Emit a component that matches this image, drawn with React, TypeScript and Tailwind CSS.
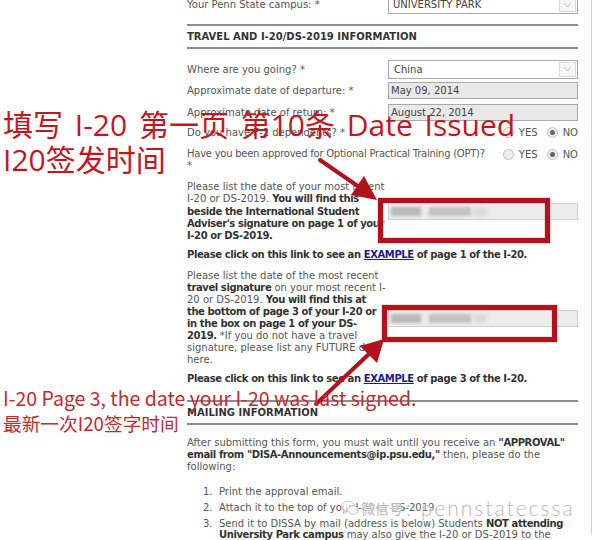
import React from "react";

function Chevron() {
  return (
    <span className="flex h-[15px] w-[17px] items-center justify-center border border-[#d9d9d9] bg-[#f6f6f6]">
      <svg width="9" height="6" viewBox="0 0 9 6">
        <polyline points="1,1 4.5,5 8,1" fill="none" stroke="#b9b9b9" strokeWidth="1" />
      </svg>
    </span>
  );
}

function Select({ value, pl }: { value: string; pl: string }) {
  return (
    <div className={`flex h-[19px] w-[190px] items-center justify-between border border-[#a9a9a9] bg-white pr-[1px] text-[#444] ${pl}`}>
      <span>{value}</span>
      <Chevron />
    </div>
  );
}

function GrayInput({ value }: { value: string }) {
  return (
    <div className="flex h-[17px] w-[190px] items-center border border-[#a9a9a9] bg-[#e8e8e8] pl-[2px] text-[#444]">
      {value}
    </div>
  );
}

function BlurInput() {
  return (
    <div className="flex h-[17px] w-[190px] items-center border border-[#cfcfcf] bg-[#ececec] pl-[2px]">
      <span className="h-[9px] w-[30px] bg-[#b9b9b9] blur-[1.5px]" />
      <span className="ml-[8px] h-[9px] w-[42px] bg-[#c2c2c2] blur-[1.5px]" />
      <span className="ml-[2px] h-[8px] w-[14px] bg-[#d8d8d8] blur-[2px]" />
    </div>
  );
}

function Radio({ checked }: { checked?: boolean }) {
  return (
    <span className="flex h-[11px] w-[11px] items-center justify-center rounded-full border border-[#c2c2c2] bg-[#eeeeee]">
      {checked && <span className="h-[5px] w-[5px] rounded-full bg-[#666]" />}
    </span>
  );
}

function YesNo() {
  return (
    <div className="ml-auto flex h-[15px] items-center text-[#555]">
      <Radio />
      <span className="ml-[5px]">YES</span>
      <span className="ml-[9px]">
        <Radio checked />
      </span>
      <span className="ml-[5px]">NO</span>
    </div>
  );
}

function Rule() {
  return <div className="h-[2px] bg-[#868d94]" />;
}

function Link() {
  return <span className="text-[#1c1c8c] underline">EXAMPLE</span>;
}

function B({ children }: { children: React.ReactNode }) {
  return <b className="tracking-[-0.4px] text-[#333]">{children}</b>;
}

export default function App() {
  return (
    <div className="relative h-[540px] w-[595px] overflow-hidden bg-white">
      <div className="h-full w-[592px] border-r border-[#d4d4d4] pl-[187px] pr-[13px] font-['DejaVu_Sans',sans-serif] text-[10px] text-[#555]">
        {/* campus */}
        <div className="-mt-[5px] flex h-[19px] items-center">
          <div className="w-[201px]">Your Penn State campus: *</div>
          <Select value="UNIVERSITY PARK" pl="pl-[4px]" />
        </div>

        <div className="mt-[10px]">
          <Rule />
        </div>
        <div className="flex h-[21px] items-center font-bold text-[#333]">
          TRAVEL AND I-20/DS-2019 INFORMATION
        </div>
        <Rule />

        <div className="mt-[11px] flex h-[18px] items-center">
          <div className="w-[201px]">Where are you going? *</div>
          <Select value="China" pl="pl-[5px]" />
        </div>
        <div className="mt-[4px] flex h-[17px] items-center">
          <div className="w-[201px]">Approximate date of departure: *</div>
          <GrayInput value="May 09, 2014" />
        </div>
        <div className="mt-[5px] flex h-[17px] items-center">
          <div className="w-[201px]">Approximate date of return: *</div>
          <GrayInput value="August 22, 2014" />
        </div>
        <div className="mt-[4px] flex h-[15px] items-center">
          <div>Do you have F-2 dependents? *</div>
          <YesNo />
        </div>
        <div className="mt-[8px] flex items-start leading-[12px]">
          <div className="tracking-[-0.25px]">
            Have you been approved for Optional Practical Training (OPT)?
            <br />*
          </div>
          <div className="-mt-[1px] ml-auto">
            <YesNo />
          </div>
        </div>

        <div className="mt-[9px] flex items-center">
          <div className="w-[201px] whitespace-nowrap leading-[12.3px]">
            Please list the date of your most recent
            <br />
            I-20 or DS-2019. <B>You will find this</B>
            <br />
            <B>beside the International Student</B>
            <br />
            <B>Adviser's signature on page 1 of your</B>
            <br />
            <B>I-20 or DS-2019.</B>
          </div>
          <BlurInput />
        </div>

        <div className="mt-[7px] whitespace-nowrap font-bold leading-[12px] tracking-[-0.4px] text-[#333]">
          Please click on this link to see an <Link /> of page 1 of the I-20.
        </div>

        <div className="mt-[9px] flex items-center">
          <div className="w-[201px] whitespace-nowrap leading-[12px]">
            Please list the date of the most recent
            <br />
            <B>travel signature</B> on your most recent I-
            <br />
            20 or DS-2019. <B>You will find this at</B>
            <br />
            <B>the bottom of page 3 of your I-20 or</B>
            <br />
            <B>in the box on page 1 of your DS-</B>
            <br />
            <B>2019.</B> *If you do not have a travel
            <br />
            signature, please list any FUTURE date
            <br />
            here.
          </div>
          <BlurInput />
        </div>

        <div className="mt-[7px] whitespace-nowrap font-bold leading-[12px] tracking-[-0.4px] text-[#333]">
          Please click on this link to see an <Link /> of page 3 of the I-20.
        </div>

        <div className="mt-[15px]">
          <Rule />
        </div>
        <div className="flex h-[21px] items-center font-bold text-[#333]">MAILING INFORMATION</div>
        <Rule />

        <div className="mt-[12px] whitespace-nowrap leading-[12px]">
          After submitting this form, you must wait until you receive an <B>"APPROVAL"</B>
          <br />
          <B>email from "DISA-Announcements@ip.psu.edu,"</B> then, please do the
          <br />
          following:
        </div>

        <div className="mt-[13px] pl-[16px] leading-[11px]">
          <div className="mb-[5px] flex">
            <span className="w-[16px]">1.</span>
            <span>Print the approval email.</span>
          </div>
          <div className="mb-[5px] flex">
            <span className="w-[16px]">2.</span>
            <span>Attach it to the top of your I-20 or DS-2019.</span>
          </div>
          <div className="flex">
            <span className="w-[16px]">3.</span>
            <span className="whitespace-nowrap">
              Send it to DISSA by mail (address is below) Students <B>NOT attending</B>
              <br />
              <B>University Park campus</B> may also give the I-20 or DS-2019 to the
            </span>
          </div>
        </div>
      </div>

      {/* annotation drawings */}
      <svg className="pointer-events-none absolute left-0 top-0" width="595" height="540" viewBox="0 0 595 540">
        <rect x="380.5" y="200.5" width="167" height="40" fill="none" stroke="#f3b5b8" strokeWidth="7" opacity="0.5" />
        <rect x="380.5" y="200.5" width="167" height="40" fill="none" stroke="#b3111b" strokeWidth="5" />
        <rect x="384.5" y="307.5" width="170" height="32" fill="none" stroke="#f3b5b8" strokeWidth="7" opacity="0.5" />
        <rect x="384.5" y="307.5" width="170" height="32" fill="none" stroke="#b3111b" strokeWidth="5" />
        {/* arrow 1 */}
        <line x1="320" y1="160" x2="362" y2="189" stroke="#b3111b" strokeWidth="4" strokeLinecap="round" />
        <polygon points="377,200 351,195 364,176" fill="#b3111b" />
        {/* arrow 2 */}
        <line x1="316" y1="404" x2="370" y2="353" stroke="#b3111b" strokeWidth="4" strokeLinecap="round" />
        <polygon points="384,339 377,363 360,346" fill="#b3111b" />
      </svg>

      {/* red annotation texts */}
      <div className="pointer-events-none absolute left-[3px] top-[110px] whitespace-nowrap font-['Open_Sans','Noto_Sans_CJK_SC',sans-serif] text-[30px] leading-none text-[#c4161e] [word-spacing:4px]">
        填写 I-20 第一页 第10条 Date Issued
      </div>
      <div className="pointer-events-none absolute left-[3px] top-[145px] whitespace-nowrap font-['Open_Sans','Noto_Sans_CJK_SC',sans-serif] text-[30px] leading-none text-[#c4161e]">
        I20签发时间
      </div>
      <div className="pointer-events-none absolute left-[3px] top-[388px] whitespace-nowrap font-['Noto_Sans_CJK_SC',sans-serif] text-[19.5px] leading-none text-[#c42a30]">
        I-20 Page 3, the date your I-20 was last signed.
      </div>
      <div className="pointer-events-none absolute left-[3px] top-[414px] whitespace-nowrap font-['Noto_Sans_CJK_SC',sans-serif] text-[18.7px] leading-none text-[#c42a30]">
        最新一次I20签字时间
      </div>

      {/* watermark */}
      <div className="pointer-events-none absolute left-[341px] top-[497px] flex items-center text-[#b8b8b8] [text-shadow:0_0_3px_#fff,0_0_3px_#fff]">
        <svg width="18" height="16" viewBox="0 0 18 16">
          <ellipse cx="7" cy="6.5" rx="6.3" ry="5.3" fill="rgba(255,255,255,0.7)" stroke="#bcbcbc" strokeWidth="0.9" />
          <ellipse cx="12" cy="10" rx="5.2" ry="4.3" fill="rgba(255,255,255,0.7)" stroke="#bcbcbc" strokeWidth="0.9" />
          <path d="M3 11 L2 14 L5.5 12" fill="none" stroke="#bcbcbc" strokeWidth="0.9" />
        </svg>
        <span className="ml-[2px] font-['Noto_Sans_CJK_SC',sans-serif] text-[14px] leading-none">微信号</span>
        <span className="ml-[3px] font-['Lato','Noto_Sans_CJK_SC',sans-serif] text-[21px] font-light leading-none tracking-[2px]">
          : pennstatecssa
        </span>
      </div>
    </div>
  );
}
